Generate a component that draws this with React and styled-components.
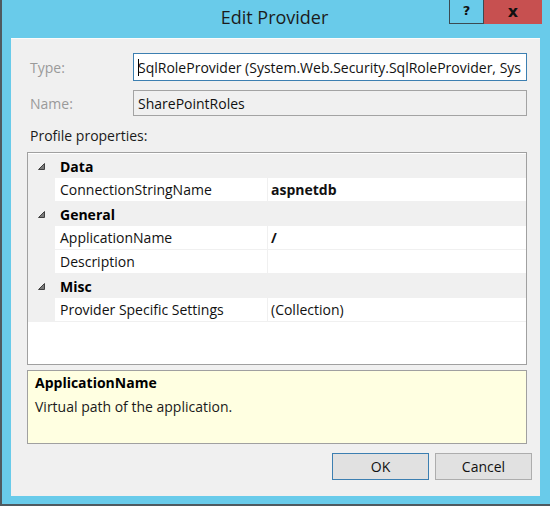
import React from 'react';
import styled, { createGlobalStyle } from 'styled-components';

const GlobalStyle = createGlobalStyle`
  html, body {
    margin: 0;
    padding: 0;
    background: #ffffff;
  }
  body {
    font-family: "Open Sans", "Noto Sans", sans-serif;
    font-size: 14px;
    color: #1a1a1a;
  }
`;

const Window = styled.div`
  width: 550px;
  height: 506px;
  box-sizing: border-box;
  background: #69cbea;
  border-left: 2px solid #4f5a60;
  border-bottom: 2px solid #4f5a60;
  display: flex;
  flex-direction: column;
  padding: 0 10px 8px 9px;
`;

const TitleBar = styled.div`
  height: 38px;
  flex: none;
  display: grid;
  grid-template-columns: 1fr auto 1fr;
`;

const Title = styled.div`
  grid-column: 2;
  font-size: 18px;
  color: #1c1c1c;
  line-height: 34px;
  padding-right: 2px;
`;

const CaptionButtons = styled.div`
  grid-column: 3;
  justify-self: end;
  display: flex;
  align-items: flex-start;
  margin-right: -2px;
`;

const CaptionButton = styled.div`
  width: ${({ wide }) => (wide ? '58px' : '35px')};
  height: 24px;
  box-sizing: border-box;
  background: ${({ close }) => (close ? '#c75050' : '#69cbea')};
  border: ${({ close }) => (close ? 'none' : '1px solid #3b4a52')};
  border-top: none;
  display: flex;
  align-items: center;
  justify-content: center;
  font-family: "DejaVu Sans", sans-serif;
  font-weight: bold;
  font-size: ${({ close }) => (close ? '16px' : '13px')};
  color: #111;
  padding-bottom: 2px;
`;

const Client = styled.div`
  flex: 1;
  background: #f0f0f0;
  border-top: 1px solid #fbfbfb;
  display: flex;
  flex-direction: column;
  padding: 14px 13px 0 16px;
  box-sizing: border-box;
`;

const FieldRow = styled.div`
  display: grid;
  grid-template-columns: 106px 1fr;
  align-items: center;
  margin-bottom: ${({ gap }) => gap}px;
`;

const Label = styled.div`
  color: #9a9a9a;
  padding-left: 3px;
`;

const Field = styled.div`
  height: ${({ h }) => h}px;
  box-sizing: border-box;
  border: 1px solid ${({ focused }) => (focused ? '#3c7fb1' : '#a3a3a3')};
  background: ${({ focused }) => (focused ? '#ffffff' : '#f0f0f0')};
  display: flex;
  align-items: center;
  padding-left: 4px;
  overflow: hidden;
  white-space: nowrap;
  color: #111;
`;

const Caret = styled.span`
  display: inline-block;
  width: 1px;
  height: 17px;
  background: #000;
  margin-right: -1px;
`;

const SectionLabel = styled.div`
  margin: 10px 0 7px 3px;
  line-height: 19px;
`;

const Grid = styled.div`
  height: 213px;
  box-sizing: border-box;
  border: 1px solid #a0a0a0;
  background: #ffffff;
  display: flex;
  flex-direction: column;
  padding-top: 1px;
`;

const Row = styled.div`
  display: grid;
  grid-template-columns: 26px 212px 1fr;
  column-gap: 1px;
  height: 24px;
  box-sizing: border-box;
  background: #f0f0f0;
  padding-bottom: ${({ category }) => (category ? '0' : '1px')};
`;

const Margin = styled.div`
  display: flex;
  align-items: center;
  justify-content: center;
  padding-left: 1px;
`;

const CategoryName = styled.div`
  grid-column: 2 / 4;
  font-weight: bold;
  padding-left: 5px;
  display: flex;
  align-items: center;
  color: #000;
`;

const Cell = styled.div`
  background: #ffffff;
  display: flex;
  align-items: center;
  padding-left: ${({ value }) => (value ? '3px' : '5px')};
  font-weight: ${({ bold }) => (bold ? 'bold' : 'normal')};
  white-space: nowrap;
  overflow: hidden;
  color: #111;
`;

const Description = styled.div`
  height: 74px;
  box-sizing: border-box;
  margin-top: 5px;
  border: 1px solid #a0a0a0;
  background: #ffffe1;
  padding: 2px 7px;
`;

const DescTitle = styled.div`
  font-weight: bold;
  line-height: 19px;
  color: #000;
`;

const DescText = styled.div`
  line-height: 19px;
  margin-top: 5px;
`;

const ButtonBar = styled.div`
  display: flex;
  justify-content: flex-end;
  gap: 6px;
  margin: 9px -5px 0 0;
`;

const Button = styled.div`
  width: 97px;
  height: 27px;
  box-sizing: border-box;
  background: #e1e1e1;
  border: 1px solid ${({ primary }) => (primary ? '#3c7fb1' : '#adadad')};
  display: flex;
  align-items: center;
  justify-content: center;
  font-size: 14px;
  color: #111;
`;

const Expander = () => (
  <svg width="7" height="7" viewBox="0 0 7 7">
    <polygon points="6.5,0.5 6.5,6.5 0.5,6.5" fill="#7a7a7a" stroke="#404040" strokeWidth="1" />
  </svg>
);

const properties = [
  {
    category: 'Data',
    items: [{ name: 'ConnectionStringName', value: 'aspnetdb', bold: true }],
  },
  {
    category: 'General',
    items: [
      { name: 'ApplicationName', value: '/', bold: true },
      { name: 'Description', value: '' },
    ],
  },
  {
    category: 'Misc',
    items: [{ name: 'Provider Specific Settings', value: '(Collection)' }],
  },
];

export default function App() {
  return (
    <>
      <GlobalStyle />
      <Window>
        <TitleBar>
          <Title>Edit Provider</Title>
          <CaptionButtons>
            <CaptionButton>?</CaptionButton>
            <CaptionButton close wide>x</CaptionButton>
          </CaptionButtons>
        </TitleBar>
        <Client>
          <FieldRow gap={9}>
            <Label>Type:</Label>
            <Field focused h={28}>
              <Caret />
              SqlRoleProvider (System.Web.Security.SqlRoleProvider, Sys
            </Field>
          </FieldRow>
          <FieldRow gap={0}>
            <Label>Name:</Label>
            <Field h={26}>SharePointRoles</Field>
          </FieldRow>
          <SectionLabel>Profile properties:</SectionLabel>
          <Grid>
            {properties.map((group) => (
              <React.Fragment key={group.category}>
                <Row category>
                  <Margin>
                    <Expander />
                  </Margin>
                  <CategoryName>{group.category}</CategoryName>
                </Row>
                {group.items.map((item) => (
                  <Row key={item.name}>
                    <Margin />
                    <Cell>{item.name}</Cell>
                    <Cell value bold={item.bold}>{item.value}</Cell>
                  </Row>
                ))}
              </React.Fragment>
            ))}
          </Grid>
          <Description>
            <DescTitle>ApplicationName</DescTitle>
            <DescText>Virtual path of the application.</DescText>
          </Description>
          <ButtonBar>
            <Button primary>OK</Button>
            <Button>Cancel</Button>
          </ButtonBar>
        </Client>
      </Window>
    </>
  );
}
